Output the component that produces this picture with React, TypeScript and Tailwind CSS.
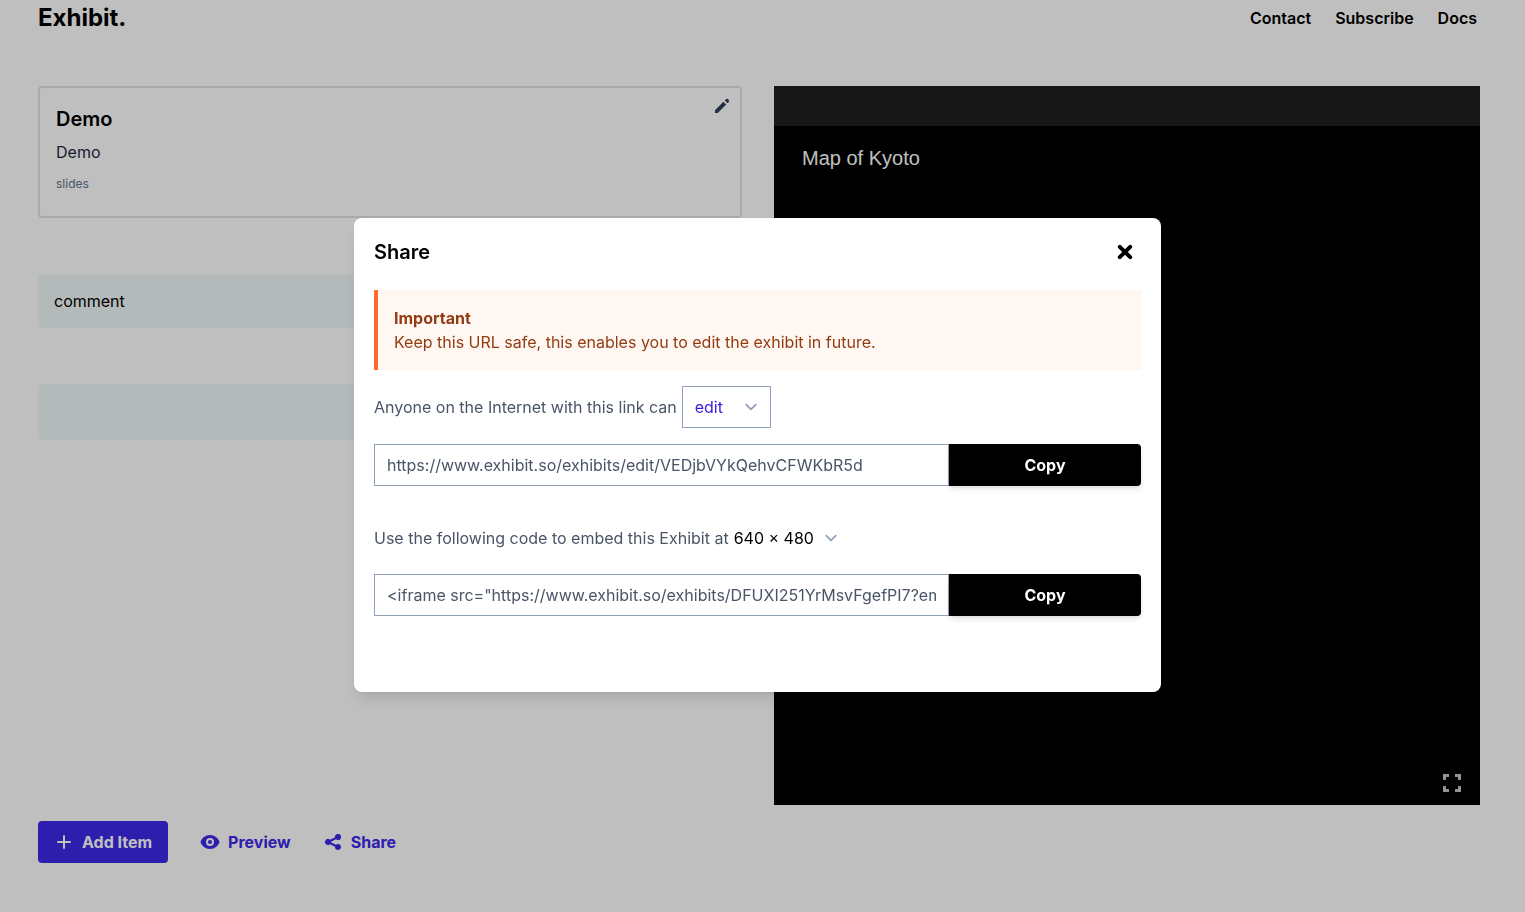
import { useState } from "react";
import type { ReactNode } from "react";
import { HiEye, HiPencil, HiShare } from "react-icons/hi";

const EDIT_URL = "https://www.exhibit.so/exhibits/edit/VEDjbVYkQehvCFWKbR5d";
const EMBED_CODE =
  '<iframe src="https://www.exhibit.so/exhibits/DFUXI251YrMsvFgefPI7?embedded=true" width="640" height="480" allowfullscreen frameborder="0"></iframe>';

function Chevron() {
  return (
    <svg
      className="pointer-events-none absolute inset-y-0 right-2 my-auto size-6 text-slate-400"
      viewBox="0 0 20 20"
      fill="none"
      stroke="currentColor"
      strokeWidth="1.5"
      strokeLinecap="round"
      strokeLinejoin="round"
      aria-hidden="true"
    >
      <path d="M6 8l4 4 4-4" />
    </svg>
  );
}

function PlusIcon() {
  return (
    <svg className="size-5" viewBox="0 0 20 20" fill="currentColor" aria-hidden="true">
      <path d="M10 3a1 1 0 0 1 1 1v5h5a1 1 0 1 1 0 2h-5v5a1 1 0 1 1-2 0v-5H4a1 1 0 1 1 0-2h5V4a1 1 0 0 1 1-1z" />
    </svg>
  );
}

function Header() {
  return (
    <header className="flex h-9 items-center justify-between pr-[3px]">
      <a href="#home" className="text-2xl font-bold text-black">
        Exhibit.
      </a>
      <nav className="flex gap-6 font-semibold text-black">
        <a href="#contact">Contact</a>
        <a href="#subscribe">Subscribe</a>
        <a href="#docs">Docs</a>
      </nav>
    </header>
  );
}

function ExhibitCard() {
  return (
    <section className="relative h-33 rounded-sm border-2 border-[#dce3ea] p-4">
      <h1 className="text-xl leading-[30px] font-semibold text-black">Demo</h1>
      <p className="mt-1.5 text-slate-800">Demo</p>
      <p className="mt-3 text-xs text-slate-500">slides</p>
      <button type="button" aria-label="Edit details" className="absolute top-2 right-2 text-slate-700">
        <HiPencil className="size-5" />
      </button>
    </section>
  );
}

function Viewer() {
  return (
    <section className="flex min-h-[719px] flex-col bg-black">
      <div className="h-10 bg-[#1f1f1f]" />
      <h2 className="flex-1 px-7 pt-4 font-['Liberation_Sans',Arial,sans-serif] text-xl leading-8 text-white">
        Map of Kyoto
      </h2>
      <div className="flex justify-end px-[19px] pb-[13px]">
        <button type="button" aria-label="Full screen" className="text-[#c4c4c4]">
          <svg className="size-[18px]" viewBox="0 0 18 18" fill="currentColor" aria-hidden="true">
            <path d="M0 0h6v3H3v3H0zM12 0h6v6h-3V3h-3zM0 12h3v3h3v3H0zM15 12h3v6h-6v-3h3z" />
          </svg>
        </button>
      </div>
    </section>
  );
}

function CopyRow({ label, value }: { label: string; value: string }) {
  return (
    <div className="flex h-[42px]">
      <input
        aria-label={label}
        readOnly
        value={value}
        className="min-w-0 flex-1 border border-slate-400 bg-white px-3 text-[#4a5568] outline-none"
      />
      <button
        type="button"
        className="w-48 rounded-r bg-black font-bold text-white shadow-md"
        onClick={() => navigator.clipboard?.writeText(value)}
      >
        Copy
      </button>
    </div>
  );
}

function Toolbar() {
  return (
    <div className="mt-4 flex h-[42px] items-center gap-8 font-bold text-[#3c28e8]">
      <ToolbarButton filled icon={<PlusIcon />}>
        Add Item
      </ToolbarButton>
      <ToolbarButton icon={<HiEye className="size-5" />}>Preview</ToolbarButton>
      <ToolbarButton icon={<HiShare className="size-5" />}>Share</ToolbarButton>
    </div>
  );
}

function ToolbarButton({ icon, filled, children }: { icon: ReactNode; filled?: boolean; children: ReactNode }) {
  return (
    <button
      type="button"
      className={
        filled
          ? "flex h-full items-center gap-2 rounded-sm bg-[#3c28e8] px-4 text-white"
          : "flex h-full items-center gap-2"
      }
    >
      {icon}
      {children}
    </button>
  );
}

function ShareDialog() {
  const [access, setAccess] = useState("edit");
  const [size, setSize] = useState("640 × 480");

  return (
    <div className="fixed inset-0 flex items-center justify-center bg-black/25 pr-2.5 pb-0.5">
      <div
        role="dialog"
        aria-modal="true"
        aria-labelledby="share-title"
        className="w-full max-w-[807px] rounded-lg bg-white px-5 pt-5 pb-[76px] text-[#4a5568] shadow-lg"
      >
        <div className="flex h-7 items-center justify-between pr-2">
          <h2 id="share-title" className="text-xl font-semibold text-black">
            Share
          </h2>
          <button type="button" aria-label="Close" className="text-black">
            <svg
              className="size-4"
              viewBox="0 0 16 16"
              fill="none"
              stroke="currentColor"
              strokeWidth="4"
              strokeLinecap="round"
              aria-hidden="true"
            >
              <path d="M2.8 2.8l10.4 10.4M13.2 2.8L2.8 13.2" />
            </svg>
          </button>
        </div>

        <div className="mt-6 border-l-4 border-[#ff6b2c] bg-[#fff7f1] p-4 text-[#933b12]">
          <p className="font-bold">Important</p>
          <p>Keep this URL safe, this enables you to edit the exhibit in future.</p>
        </div>

        <div className="mt-4 mb-4 flex items-center gap-[5px]">
          <label htmlFor="access">Anyone on the Internet with this link can</label>
          <div className="relative">
            <select
              id="access"
              value={access}
              onChange={(e) => setAccess(e.target.value)}
              className="h-[42px] w-[89px] appearance-none border border-slate-400 bg-white pl-3 text-[#3c20dc] outline-none"
            >
              <option>edit</option>
              <option>view</option>
            </select>
            <Chevron />
          </div>
        </div>
        <CopyRow label="Share link" value={EDIT_URL} />

        <div className="mt-8 mb-4 flex items-center gap-[5px]">
          <label htmlFor="size">Use the following code to embed this Exhibit at</label>
          <div className="relative">
            <select
              id="size"
              value={size}
              onChange={(e) => setSize(e.target.value)}
              className="h-10 appearance-none bg-white pr-9 text-black outline-none"
            >
              <option>640 × 480</option>
              <option>800 × 600</option>
            </select>
            <Chevron />
          </div>
        </div>
        <CopyRow label="Embed code" value={EMBED_CODE} />
      </div>
    </div>
  );
}

export default function App() {
  return (
    <div className="min-h-screen bg-white pr-[45px] pl-[38px] font-[Inter,sans-serif] text-base">
      <Header />
      <main className="pt-[50px]">
        <div className="grid grid-cols-[704fr_706fr] gap-8">
          <div>
            <ExhibitCard />
            <div className="mt-14 flex h-[54px] items-center rounded-sm bg-[#f0f7f8] px-4 text-black">comment</div>
            <div className="mt-14 h-14 rounded-sm bg-[#f0f7f8]" />
          </div>
          <Viewer />
        </div>
        <Toolbar />
      </main>
      <ShareDialog />
    </div>
  );
}
